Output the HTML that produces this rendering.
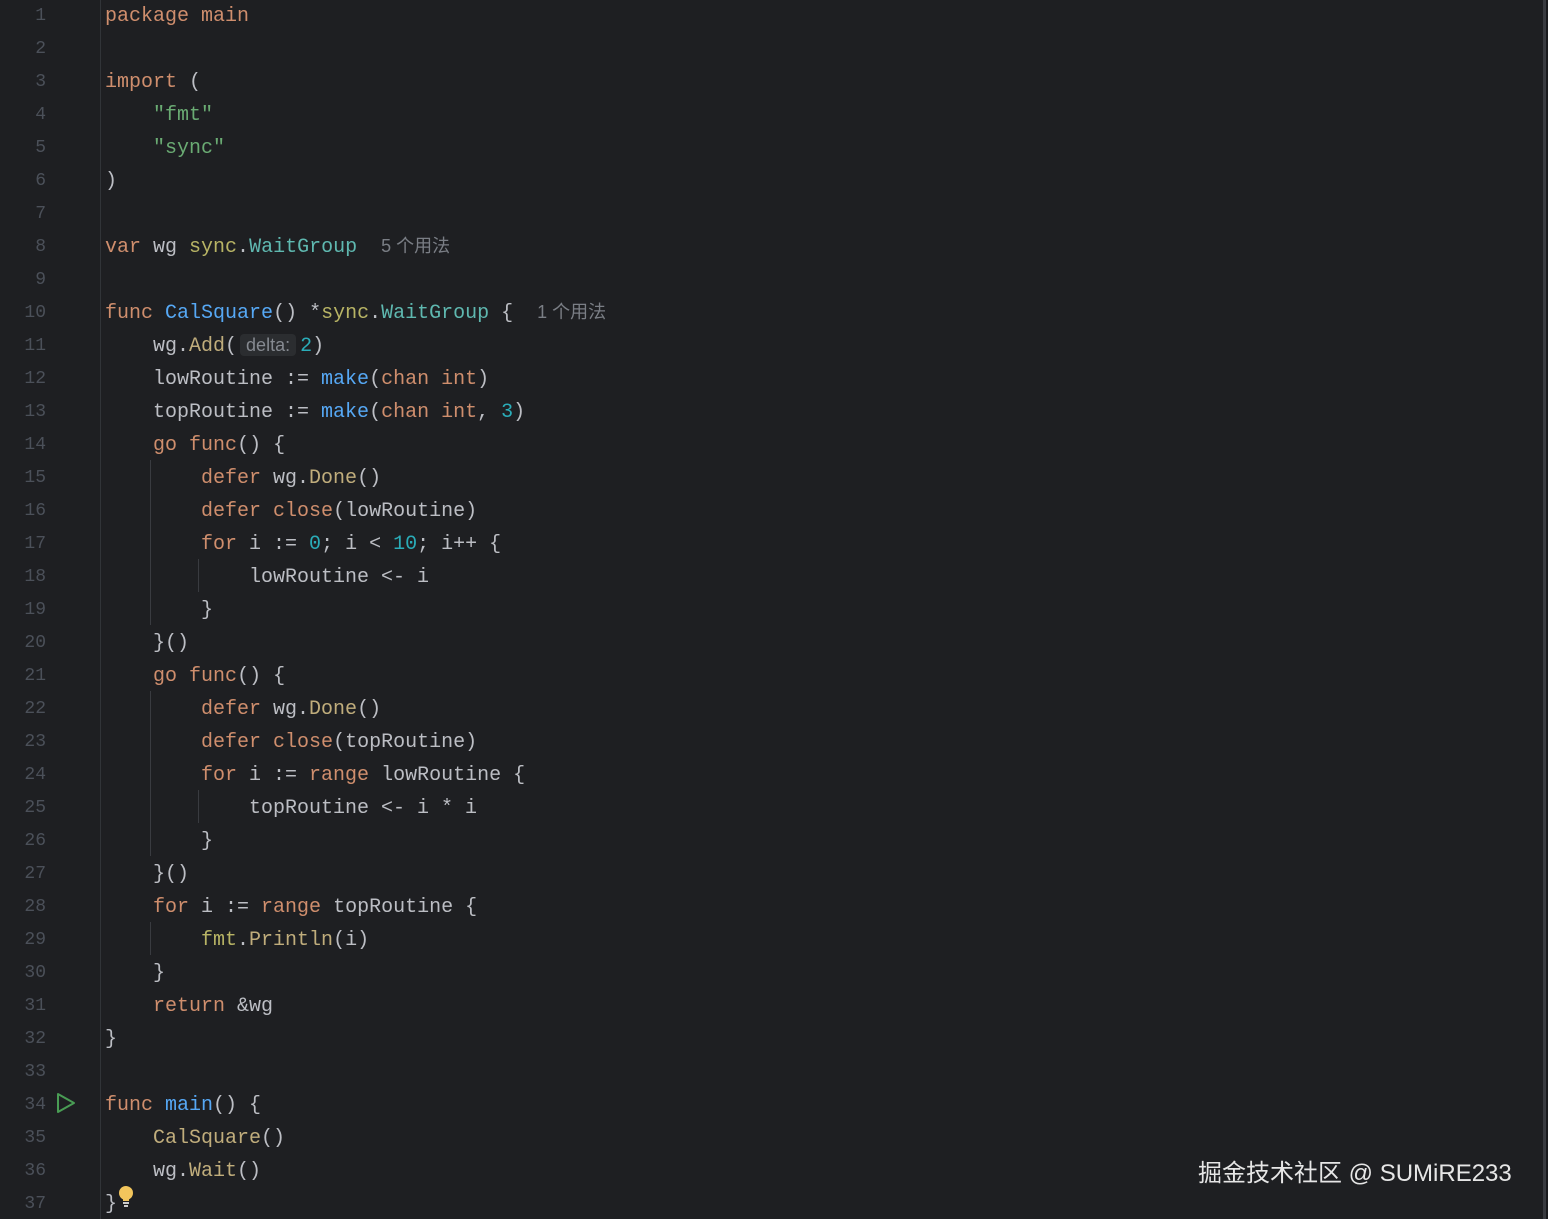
<!DOCTYPE html>
<html><head><meta charset="utf-8"><style>
html,body{margin:0;padding:0;background:#1e1f22;width:1548px;height:1219px;overflow:hidden;position:relative}
.ln{position:absolute;left:0;width:46px;text-align:right;font:18px "Liberation Mono",monospace;color:#4b5059;line-height:33px}
.code{position:absolute;left:105px;top:0px;margin:0;font:20px "Liberation Mono",monospace;color:#bcbec4;line-height:33px;white-space:pre}
.k{color:#cf8e6d}.f{color:#56a8f5}.s{color:#6aab73}.n{color:#2aacb8}.p{color:#b8b465}.t{color:#5fb8b0}.c{color:#c0ad7c}
.h{font:18px "Liberation Sans","Noto Sans CJK SC",sans-serif;color:#7a7e85}
.hint{font:18px "Liberation Sans",sans-serif;color:#868a91;background:#2b2d30;border-radius:4px;padding:1px 6px;margin:0 4px 0 3px}
.g{position:absolute;width:1px;background:#393b40}
</style></head><body>
<div class="g" style="left:100px;top:0;height:1219px;background:#313438"></div>
<div class="g" style="left:150px;top:460px;height:165px"></div>
<div class="g" style="left:198px;top:559px;height:33px"></div>
<div class="g" style="left:150px;top:691px;height:165px"></div>
<div class="g" style="left:198px;top:790px;height:33px"></div>
<div class="g" style="left:150px;top:922px;height:33px"></div>
<div style="position:absolute;left:1543px;top:0;width:3px;height:1219px;background:#393b40"></div>
<div style="position:absolute;left:1546px;top:0;width:2px;height:1219px;background:#1a1b1e"></div>
<div id="nums"></div>
<svg style="position:absolute;left:55px;top:1092px" width="22" height="22"><path d="M3 2 L19 11 L3 20 Z" fill="none" stroke="#499c54" stroke-width="2" stroke-linejoin="round"/></svg>
<svg style="position:absolute;left:117px;top:1185px" width="18" height="24"><circle cx="9" cy="8" r="7" fill="#f2c55c"/><rect x="6" y="13" width="6" height="3" fill="#f2c55c"/><rect x="6" y="17" width="6" height="2" fill="#ccc"/><rect x="7" y="20" width="4" height="2" fill="#ccc"/></svg>
<pre class="code"><span class="k">package</span> <span class="k">main</span>

<span class="k">import</span> (
    <span class="s">"fmt"</span>
    <span class="s">"sync"</span>
)

<span class="k">var</span> wg <span class="p">sync</span>.<span class="t">WaitGroup</span>  <span class="h">5 个用法</span>

<span class="k">func</span> <span class="f">CalSquare</span>() *<span class="p">sync</span>.<span class="t">WaitGroup</span> {  <span class="h">1 个用法</span>
    wg.<span class="c">Add</span>(<span class="hint">delta:</span><span class="n">2</span>)
    lowRoutine := <span class="f">make</span>(<span class="k">chan</span> <span class="k">int</span>)
    topRoutine := <span class="f">make</span>(<span class="k">chan</span> <span class="k">int</span>, <span class="n">3</span>)
    <span class="k">go</span> <span class="k">func</span>() {
        <span class="k">defer</span> wg.<span class="c">Done</span>()
        <span class="k">defer</span> <span class="k">close</span>(lowRoutine)
        <span class="k">for</span> i := <span class="n">0</span>; i &lt; <span class="n">10</span>; i++ {
            lowRoutine &lt;- i
        }
    }()
    <span class="k">go</span> <span class="k">func</span>() {
        <span class="k">defer</span> wg.<span class="c">Done</span>()
        <span class="k">defer</span> <span class="k">close</span>(topRoutine)
        <span class="k">for</span> i := <span class="k">range</span> lowRoutine {
            topRoutine &lt;- i * i
        }
    }()
    <span class="k">for</span> i := <span class="k">range</span> topRoutine {
        <span class="p">fmt</span>.<span class="c">Println</span>(i)
    }
    <span class="k">return</span> &amp;wg
}

<span class="k">func</span> <span class="f">main</span>() {
    <span class="c">CalSquare</span>()
    wg.<span class="c">Wait</span>()
}</pre>
<div style="position:absolute;left:1198px;top:1156px;font:24px 'Liberation Sans','Noto Sans CJK SC',sans-serif;color:#e6e6e6;line-height:36px">掘金技术社区 @ SUMiRE233</div>
<script>
var h='';for(var i=1;i<=37;i++){h+='<div class="ln" style="top:'+(i*33-33)+'px">'+i+'</div>';}
document.getElementById('nums').innerHTML=h;
</script>
</body></html>
